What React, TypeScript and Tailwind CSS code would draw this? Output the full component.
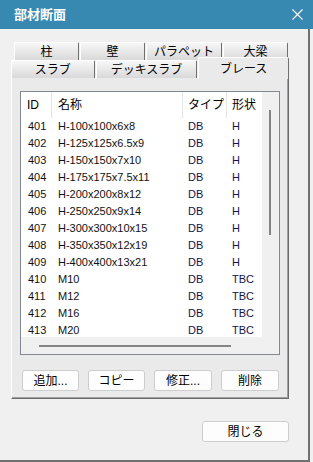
import { useState } from "react";

const ROWS = [
  ["401", "H-100x100x6x8", "DB", "H"],
  ["402", "H-125x125x6.5x9", "DB", "H"],
  ["403", "H-150x150x7x10", "DB", "H"],
  ["404", "H-175x175x7.5x11", "DB", "H"],
  ["405", "H-200x200x8x12", "DB", "H"],
  ["406", "H-250x250x9x14", "DB", "H"],
  ["407", "H-300x300x10x15", "DB", "H"],
  ["408", "H-350x350x12x19", "DB", "H"],
  ["409", "H-400x400x13x21", "DB", "H"],
  ["410", "M10", "DB", "TBC"],
  ["411", "M12", "DB", "TBC"],
  ["412", "M16", "DB", "TBC"],
  ["413", "M20", "DB", "TBC"],
];

const BACK_TABS = [
  { label: "柱", w: "w-[65px]" },
  { label: "壁", w: "w-[65px]" },
  { label: "パラペット", w: "w-[76px]" },
  { label: "大梁", w: "w-[65px]" },
];

const jp = "font-['Liberation_Sans','Noto_Sans_CJK_JP',sans-serif]";

function Tab({ label, className }: { label: string; className: string }) {
  return (
    <div
      className={`h-full flex items-center justify-center border-t border-l border-white border-r border-r-[#6f6f6f] rounded-t-[2px] bg-gradient-to-b from-[#f7f7f7] to-[#d9d9d9] text-[12px] text-black ${className}`}
    >
      {label}
    </div>
  );
}

function Button({ label, className }: { label: string; className: string }) {
  return (
    <button
      className={`h-[21px] flex items-center justify-center rounded-[3px] border border-[#cdcdcd] bg-[#fdfdfd] text-[12px] text-black ${className}`}
    >
      {label}
    </button>
  );
}

export default function App() {
  const [active] = useState("ブレース");

  return (
    <div className={`w-[313px] h-[462px] bg-[#f0f0f0] flex flex-col overflow-hidden ${jp}`}>
      {/* Title bar */}
      <div className="h-[29px] shrink-0 bg-[#3889b2] flex items-center justify-between pl-[14px] pr-[11px]">
        <span className="text-white font-bold text-[13px] leading-none">部材断面</span>
        <svg width="11" height="11" viewBox="0 0 11 11" className="mr-[-1px]">
          <path d="M0.5 0.5 L10.5 10.5 M10.5 0.5 L0.5 10.5" stroke="#ffffff" strokeWidth="1.1" fill="none" />
        </svg>
      </div>

      {/* Window body */}
      <div className="w-[310px] flex-1 border-r-2 border-b-2 border-[#707070] flex flex-col">
        <div className="w-[278px] ml-[11px] mt-[13px] flex flex-col">
          {/* Back tab row */}
          <div className="h-[18px] flex gap-[1px] pl-[3px]">
            {BACK_TABS.map((t) => (
              <Tab key={t.label} label={t.label} className={t.w} />
            ))}
          </div>
          {/* Front tab row */}
          <div className="h-[18px] flex gap-[1px] relative z-10">
            <Tab label="スラブ" className="w-[84px]" />
            <Tab label="デッキスラブ" className="w-[102px]" />
            <div
              className={`w-[91px] h-[22px] -mt-[3px] flex items-center justify-center border-t border-l border-white border-r border-r-[#6f6f6f] rounded-t-[2px] bg-[#eaeaea] text-[12px] text-black`}
            >
              {active}
            </div>
          </div>

          {/* Tab panel */}
          <div className="h-[322px] -mt-[1px] border-t border-l border-white border-r border-b border-r-[#6b6b6b] border-b-[#6b6b6b] bg-[#eaeaea] shadow-[inset_-1px_-1px_0_#a0a0a0] flex flex-col pl-[8px] pt-[13px]">
            {/* List box */}
            <div className="w-[260px] h-[264px] border border-[#828790] bg-white grid grid-cols-[1fr_17px] grid-rows-[1fr_17px]">
              <div className="overflow-hidden">
                <div className="grid grid-cols-[31px_131px_44px_1fr] h-[26px] text-[12px] text-black">
                  <div className="border-r border-[#e5e5e5] pl-[6px] flex items-center">ID</div>
                  <div className="border-r border-[#e5e5e5] pl-[6px] flex items-center">名称</div>
                  <div className="border-r border-[#e5e5e5] pl-[5px] flex items-center">タイプ</div>
                  <div className="pl-[5px] flex items-center">形状</div>
                </div>
                {ROWS.map((r) => (
                  <div key={r[0]} className="grid grid-cols-[31px_131px_44px_1fr] h-[17px] text-[11px] leading-[17px] text-[#111]">
                    <div className="pl-[7px]">{r[0]}</div>
                    <div className="pl-[6px] whitespace-nowrap">{r[1]}</div>
                    <div className="pl-[5px] text-[#14144a]">{r[2]}</div>
                    <div className="pl-[5px] text-[#14144a]">{r[3]}</div>
                  </div>
                ))}
              </div>
              {/* vertical scroll */}
              <div className="bg-[#f0f0f0] pt-[18px] pl-[7px]">
                <div className="w-[2px] h-[125px] bg-[#858585]" />
              </div>
              {/* horizontal scroll */}
              <div className="bg-[#f0f0f0] pt-[8px] pl-[18px]">
                <div className="w-[192px] h-[2px] bg-[#858585]" />
              </div>
              <div className="bg-[#f0f0f0]" />
            </div>

            {/* Buttons */}
            <div className="flex gap-[9px] mt-[15px] ml-[2px]">
              <Button label="追加..." className="w-[57px]" />
              <Button label="コピー" className="w-[57px]" />
              <Button label="修正..." className="w-[58px]" />
              <Button label="削除" className="w-[58px]" />
            </div>
          </div>

          {/* Close */}
          <div className="flex justify-end mt-[22px]">
            <Button label="閉じる" className="w-[87px]" />
          </div>
        </div>
      </div>
    </div>
  );
}
